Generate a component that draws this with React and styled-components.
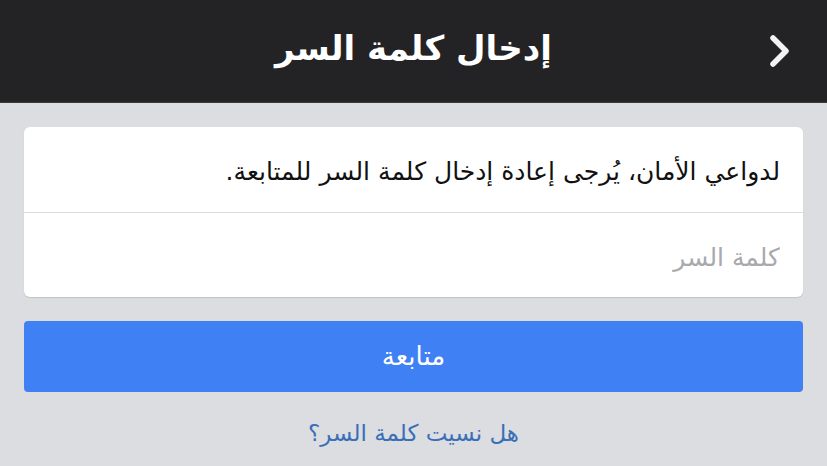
import styled, { createGlobalStyle } from "styled-components";

const GlobalStyle = createGlobalStyle`
  html, body {
    margin: 0;
    padding: 0;
    background: #dcdde1;
    font-family: "DejaVu Sans", "Noto Sans", sans-serif;
  }
`;

const Page = styled.div`
  direction: rtl;
  width: 827px;
  height: 466px;
  background: #dcdde1;
  overflow: hidden;
`;

const Header = styled.header`
  height: 102px;
  background: #232325;
  border-bottom: 1px solid #3a3a3c;
  display: grid;
  grid-template-columns: 100px 1fr 100px;
  align-items: center;
`;

const BackButton = styled.button`
  border: none;
  background: transparent;
  padding: 0 34px 0 0;
  display: flex;
  align-items: center;
  cursor: pointer;
`;

const Title = styled.h1`
  margin: 0;
  color: #fff;
  font-size: 34px;
  font-weight: bold;
  text-align: center;
  padding-bottom: 6px;
`;

const Content = styled.main`
  padding: 24px;
  display: flex;
  flex-direction: column;
`;

const Card = styled.div`
  background: #fff;
  border-radius: 6px;
  box-shadow: 0 1px 1px rgba(0, 0, 0, 0.12);
`;

const Row = styled.div`
  height: 85px;
  display: flex;
  align-items: center;
  padding: 4px 23px 0;
  box-sizing: border-box;
  font-size: 25px;
  color: ${(p) => (p.$muted ? "#a9a9ad" : "#111")};
  & + & {
    border-top: 1px solid #dcdcdf;
    height: 85px;
  }
`;

const PasswordInput = styled.input`
  border: none;
  outline: none;
  width: 100%;
  padding: 0;
  font: inherit;
  font-size: 25px;
  direction: rtl;
  background: transparent;
  &::placeholder {
    color: #a9a9ad;
  }
`;

const PrimaryButton = styled.button`
  margin-top: 24px;
  height: 71px;
  border: none;
  border-radius: 4px;
  background: #4080f5;
  color: #fff;
  font: inherit;
  font-size: 26px;
  padding-bottom: 2px;
`;

const Link = styled.a`
  margin-top: 28px;
  text-align: center;
  color: #3a6fb8;
  font-size: 23px;
  text-decoration: none;
`;

const Chevron = () => (
  <svg width="26" height="36" viewBox="0 0 26 36">
    <path
      d="M6 5 L19 18 L6 31"
      fill="none"
      stroke="#f2f2f2"
      strokeWidth="5.5"
      strokeLinecap="round"
      strokeLinejoin="round"
    />
  </svg>
);

export default function App() {
  return (
    <Page>
      <GlobalStyle />
      <Header>
        <BackButton aria-label="رجوع">
          <Chevron />
        </BackButton>
        <Title>إدخال كلمة السر</Title>
        <span />
      </Header>
      <Content>
        <Card>
          <Row>لدواعي الأمان، يُرجى إعادة إدخال كلمة السر للمتابعة.</Row>
          <Row $muted>
            <PasswordInput type="password" placeholder="كلمة السر" />
          </Row>
        </Card>
        <PrimaryButton>متابعة</PrimaryButton>
        <Link href="#">هل نسيت كلمة السر؟</Link>
      </Content>
    </Page>
  );
}
